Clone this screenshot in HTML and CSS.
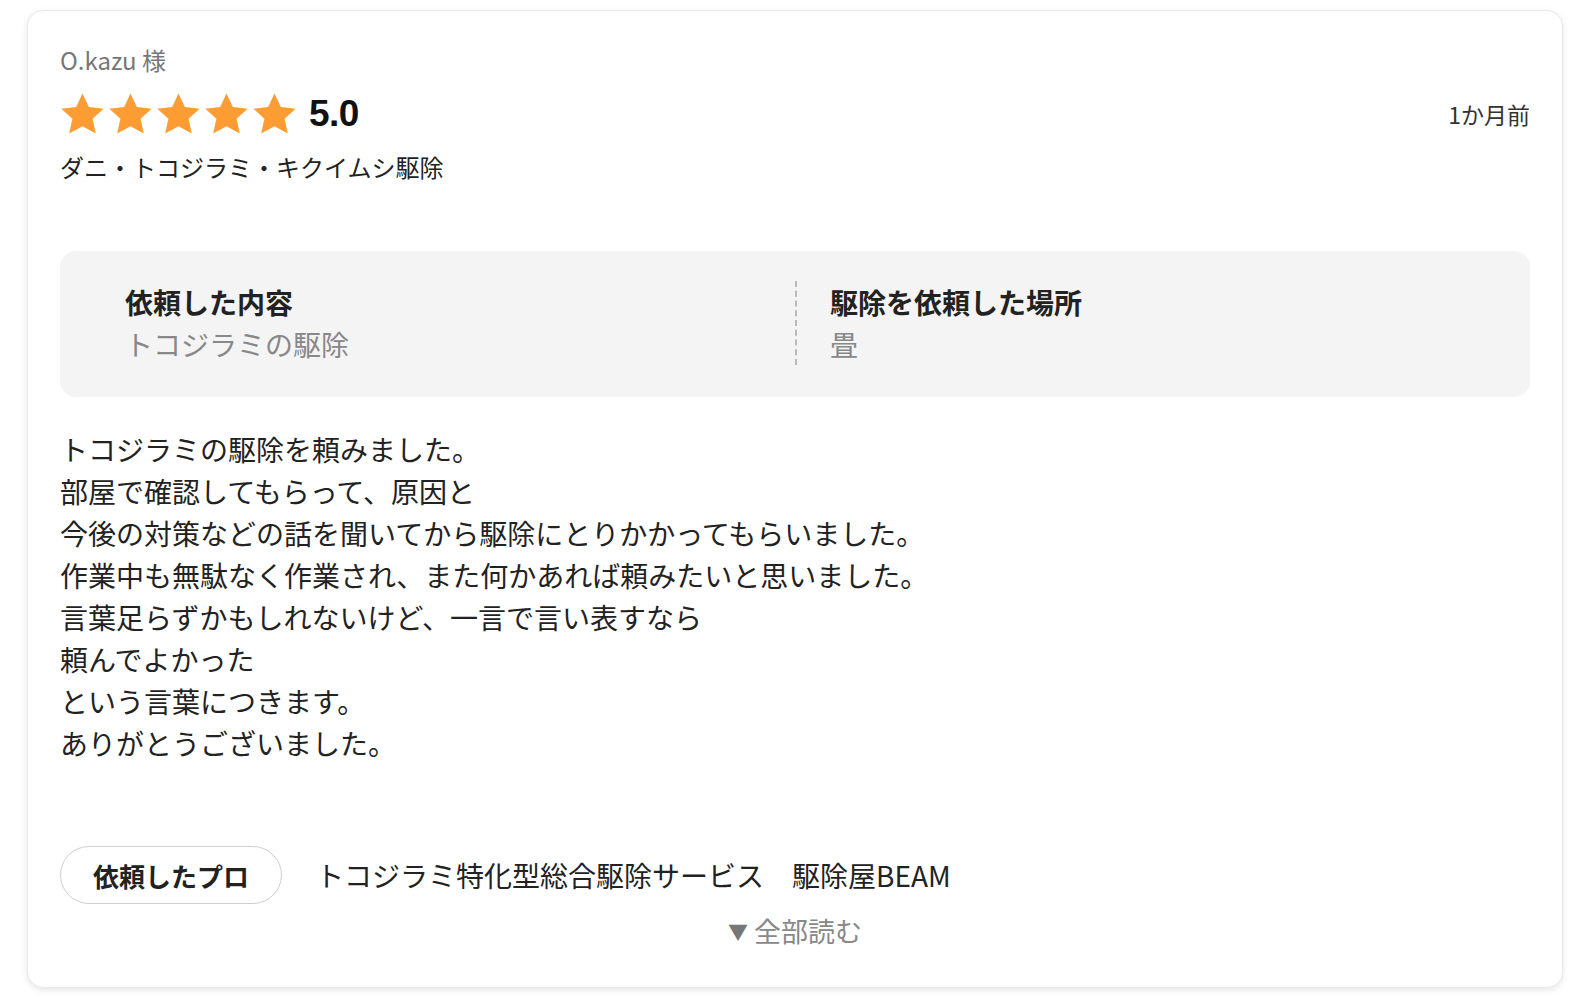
FILE: index.html
```html
<!DOCTYPE html>
<html lang="ja">
<head>
<meta charset="utf-8">
<title>Review</title>
<link rel="stylesheet" href="styles.css">
</head>
<body>
<article class="card">
  <header class="head">
    <div class="head-main">
      <div class="name">O.kazu 様</div>
      <div class="rating">
        <div class="stars">
          <svg class="star" viewBox="0 0 24 23"><path d="M12 0.3l3.4 7.2 7.9.9-5.9 5.4 1.7 7.9L12 17.8l-7.1 3.9 1.7-7.9L.7 8.4l7.9-.9z"/></svg>
          <svg class="star" viewBox="0 0 24 23"><path d="M12 0.3l3.4 7.2 7.9.9-5.9 5.4 1.7 7.9L12 17.8l-7.1 3.9 1.7-7.9L.7 8.4l7.9-.9z"/></svg>
          <svg class="star" viewBox="0 0 24 23"><path d="M12 0.3l3.4 7.2 7.9.9-5.9 5.4 1.7 7.9L12 17.8l-7.1 3.9 1.7-7.9L.7 8.4l7.9-.9z"/></svg>
          <svg class="star" viewBox="0 0 24 23"><path d="M12 0.3l3.4 7.2 7.9.9-5.9 5.4 1.7 7.9L12 17.8l-7.1 3.9 1.7-7.9L.7 8.4l7.9-.9z"/></svg>
          <svg class="star" viewBox="0 0 24 23"><path d="M12 0.3l3.4 7.2 7.9.9-5.9 5.4 1.7 7.9L12 17.8l-7.1 3.9 1.7-7.9L.7 8.4l7.9-.9z"/></svg>
        </div>
        <span class="score">5.0</span>
      </div>
      <div class="category">ダニ・トコジラミ・キクイムシ駆除</div>
    </div>
    <div class="date">1か月前</div>
  </header>

  <section class="info">
    <div class="info-col">
      <div class="info-label">依頼した内容</div>
      <div class="info-value">トコジラミの駆除</div>
    </div>
    <div class="info-col info-col-right">
      <div class="info-label">駆除を依頼した場所</div>
      <div class="info-value">畳</div>
    </div>
  </section>

  <div class="body">
    <p>トコジラミの駆除を頼みました。</p>
    <p>部屋で確認してもらって、原因と</p>
    <p>今後の対策などの話を聞いてから駆除にとりかかってもらいました。</p>
    <p>作業中も無駄なく作業され、また何かあれば頼みたいと思いました。</p>
    <p>言葉足らずかもしれないけど、一言で言い表すなら</p>
    <p>頼んでよかった</p>
    <p>という言葉につきます。</p>
    <p>ありがとうございました。</p>
  </div>

  <div class="pro">
    <span class="pro-pill">依頼したプロ</span>
    <span class="pro-name">トコジラミ特化型総合駆除サービス　駆除屋BEAM</span>
  </div>

  <div class="more"><span class="more-arrow">▼</span> 全部読む</div>
</article>
</body>
</html>
```

FILE: styles.css
```css
html, body {
  margin: 0;
  padding: 0;
  background: #ffffff;
}

body {
  font-family: "Noto Sans CJK JP", "Noto Sans", sans-serif;
  color: #222222;
}

.card {
  margin: 10px 29px 14px 27px;
  padding: 32px 32px 35px 32px;
  border: 1px solid #e9e9e9;
  border-radius: 16px;
  box-shadow: 0 2px 6px rgba(0, 0, 0, 0.10);
  background: #ffffff;
}

.head {
  display: flex;
  justify-content: space-between;
  align-items: center;
}

.name {
  font-size: 24px;
  line-height: 34px;
  color: #777777;
}

.rating {
  display: flex;
  align-items: center;
  margin-top: 12px;
  height: 50px;
}

.stars {
  display: flex;
  gap: 3px;
}

.star {
  width: 45px;
  height: 43px;
  fill: #fd9c32;
  display: block;
}

.score {
  font-family: "Liberation Sans", Arial, sans-serif;
  font-weight: 700;
  font-size: 37px;
  margin-left: 12px;
  color: #111111;
  letter-spacing: -0.5px;
}

.category {
  margin-top: 10px;
  font-size: 24px;
  line-height: 36px;
  color: #222222;
}

.date {
  font-size: 23px;
  color: #333333;
}

.info {
  margin-top: 66px;
  background: #f4f4f4;
  border-radius: 16px;
  padding: 30px 32px 32px 32px;
  display: grid;
  grid-template-columns: 1fr 1fr;
}

.info-col {
  padding-left: 33px;
}

.info-col-right {
  border-left: 2px dashed #b9b9b9;
  padding-left: 33px;
}

.info-label {
  font-size: 28px;
  font-weight: 700;
  line-height: 42px;
  color: #222222;
}

.info-value {
  font-size: 28px;
  line-height: 42px;
  color: #888888;
}

.body {
  margin-top: 31px;
  font-size: 28px;
  line-height: 42px;
  color: #222222;
}

.body p {
  margin: 0;
}

.pro {
  margin-top: 82px;
  display: flex;
  align-items: center;
}

.pro-pill {
  display: inline-flex;
  align-items: center;
  box-sizing: border-box;
  height: 58px;
  padding: 0 32px;
  border: 1.5px solid #cfcfcf;
  border-radius: 29px;
  font-size: 26px;
  font-weight: 700;
  color: #222222;
}

.pro-name {
  margin-left: 34px;
  font-size: 28px;
  color: #222222;
}

.more {
  margin-top: 7px;
  text-align: center;
  font-size: 27px;
  line-height: 40px;
  color: #888888;
}

.more-arrow {
  font-size: 20px;
  vertical-align: 2px;
  color: #777777;
}
```
